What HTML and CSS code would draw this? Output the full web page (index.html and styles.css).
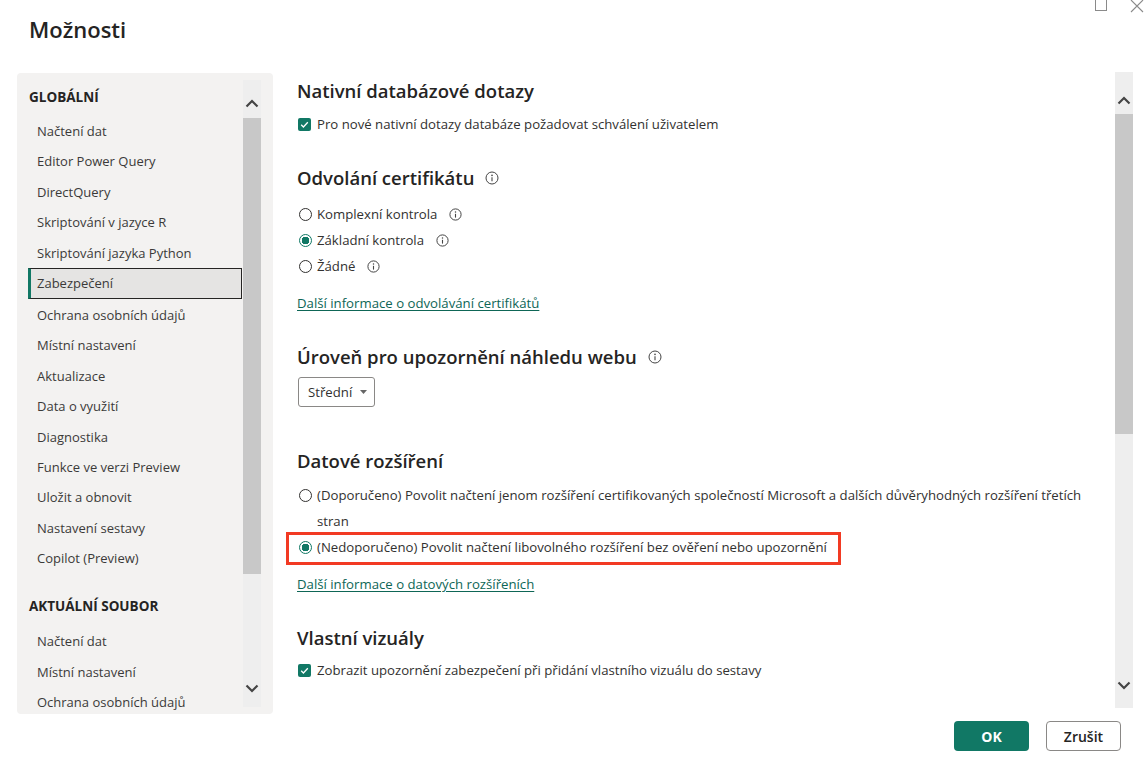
FILE: index.html
```html
<!DOCTYPE html>
<html lang="cs">
<head>
<meta charset="utf-8">
<title>Možnosti</title>
<link rel="stylesheet" href="styles.css">
</head>
<body>
<div class="window-controls">
  <span class="wc-max"></span>
  <svg class="wc-close" width="14" height="13" viewBox="0 0 14 13"><path d="M1 0 L13 12 M13 0 L1 12" stroke="#8a8a8a" stroke-width="1.1" fill="none"/></svg>
</div>
<div class="dialog">
  <h1 class="title">Možnosti</h1>
  <div class="main">
    <nav class="sidebar">
      <div class="nav-list">
        <div class="nav-head">GLOBÁLNÍ</div>
        <div class="nav-item">Načtení dat</div>
        <div class="nav-item">Editor Power Query</div>
        <div class="nav-item">DirectQuery</div>
        <div class="nav-item">Skriptování v jazyce R</div>
        <div class="nav-item">Skriptování jazyka Python</div>
        <div class="nav-item selected">Zabezpečení</div>
        <div class="nav-item">Ochrana osobních údajů</div>
        <div class="nav-item">Místní nastavení</div>
        <div class="nav-item">Aktualizace</div>
        <div class="nav-item">Data o využití</div>
        <div class="nav-item">Diagnostika</div>
        <div class="nav-item">Funkce ve verzi Preview</div>
        <div class="nav-item">Uložit a obnovit</div>
        <div class="nav-item">Nastavení sestavy</div>
        <div class="nav-item">Copilot (Preview)</div>
        <div class="nav-head second">AKTUÁLNÍ SOUBOR</div>
        <div class="nav-item">Načtení dat</div>
        <div class="nav-item">Místní nastavení</div>
        <div class="nav-item">Ochrana osobních údajů</div>
      </div>
      <div class="scrollbar side-scroll">
        <svg class="chev" width="14" height="9" viewBox="0 0 14 9"><path d="M1.5 7.5 L7 2 L12.5 7.5" stroke="#444" stroke-width="2.2" fill="none"/></svg>
        <div class="thumb side-thumb"></div>
        <div class="track-fill"></div>
        <svg class="chev" width="14" height="9" viewBox="0 0 14 9"><path d="M1.5 1.5 L7 7 L12.5 1.5" stroke="#444" stroke-width="2.2" fill="none"/></svg>
      </div>
    </nav>
    <section class="content">
      <div class="content-inner">
        <h2 class="heading h-first">Nativní databázové dotazy</h2>
        <div class="row check-row r-1">
          <span class="checkbox"><svg width="13" height="13" viewBox="0 0 13 13"><path d="M3.2 6.8 L5.4 9 L9.8 4.3" stroke="#fff" stroke-width="1.3" fill="none"/></svg></span>
          <span>Pro nové nativní dotazy databáze požadovat schválení uživatelem</span>
        </div>

        <h2 class="heading h-sec2">Odvolání certifikátu <svg class="info big" width="14" height="14" viewBox="0 0 14 14"><circle cx="7" cy="7" r="6" stroke="#444" stroke-width="1" fill="none"/><circle cx="7" cy="4.4" r="0.8" fill="#444"/><path d="M7 6.2 V10.2" stroke="#444" stroke-width="1.1"/></svg></h2>
        <div class="radio-group rg-1">
          <div class="row"><span class="radio"></span><span>Komplexní kontrola</span><svg class="info" width="13" height="13" viewBox="0 0 13 13"><circle cx="6.5" cy="6.5" r="5.6" stroke="#444" stroke-width="1" fill="none"/><circle cx="6.5" cy="4" r="0.75" fill="#444"/><path d="M6.5 5.8 V9.6" stroke="#444" stroke-width="1.1"/></svg></div>
          <div class="row"><span class="radio on"></span><span>Základní kontrola</span><svg class="info" width="13" height="13" viewBox="0 0 13 13"><circle cx="6.5" cy="6.5" r="5.6" stroke="#444" stroke-width="1" fill="none"/><circle cx="6.5" cy="4" r="0.75" fill="#444"/><path d="M6.5 5.8 V9.6" stroke="#444" stroke-width="1.1"/></svg></div>
          <div class="row"><span class="radio"></span><span>Žádné</span><svg class="info" width="13" height="13" viewBox="0 0 13 13"><circle cx="6.5" cy="6.5" r="5.6" stroke="#444" stroke-width="1" fill="none"/><circle cx="6.5" cy="4" r="0.75" fill="#444"/><path d="M6.5 5.8 V9.6" stroke="#444" stroke-width="1.1"/></svg></div>
        </div>
        <a class="link l-1" href="#">Další informace o odvolávání certifikátů</a>

        <h2 class="heading h-sec3">Úroveň pro upozornění náhledu webu <svg class="info big" width="14" height="14" viewBox="0 0 14 14"><circle cx="7" cy="7" r="6" stroke="#444" stroke-width="1" fill="none"/><circle cx="7" cy="4.4" r="0.8" fill="#444"/><path d="M7 6.2 V10.2" stroke="#444" stroke-width="1.1"/></svg></h2>
        <div class="dropdown">Střední <svg width="7" height="4" viewBox="0 0 7 4"><path d="M0 0 H7 L3.5 4 Z" fill="#666"/></svg></div>

        <h2 class="heading h-sec4">Datové rozšíření</h2>
        <div class="radio-group rg-2">
          <div class="row wrap"><span class="radio"></span><span class="wrap-text">(Doporučeno) Povolit načtení jenom rozšíření certifikovaných společností Microsoft a dalších důvěryhodných rozšíření třetích stran</span></div>
          <div class="row highlighted"><span class="radio on"></span><span>(Nedoporučeno) Povolit načtení libovolného rozšíření bez ověření nebo upozornění</span></div>
        </div>
        <a class="link l-2" href="#">Další informace o datových rozšířeních</a>

        <h2 class="heading h-sec5">Vlastní vizuály</h2>
        <div class="row check-row r-5">
          <span class="checkbox"><svg width="13" height="13" viewBox="0 0 13 13"><path d="M3.2 6.8 L5.4 9 L9.8 4.3" stroke="#fff" stroke-width="1.3" fill="none"/></svg></span>
          <span>Zobrazit upozornění zabezpečení při přidání vlastního vizuálu do sestavy</span>
        </div>
      </div>
      <div class="scrollbar main-scroll">
        <svg class="chev" width="14" height="9" viewBox="0 0 14 9"><path d="M1.5 7.5 L7 2 L12.5 7.5" stroke="#444" stroke-width="2.2" fill="none"/></svg>
        <div class="thumb main-thumb"></div>
        <div class="track-fill"></div>
        <svg class="chev" width="14" height="9" viewBox="0 0 14 9"><path d="M1.5 1.5 L7 7 L12.5 1.5" stroke="#444" stroke-width="2.2" fill="none"/></svg>
      </div>
    </section>
  </div>
  <div class="footer">
    <button class="btn btn-ok">OK</button>
    <button class="btn btn-cancel">Zrušit</button>
  </div>
</div>
</body>
</html>
```

FILE: styles.css
```css
* { box-sizing: border-box; }
html, body { margin: 0; padding: 0; }
body {
  width: 1144px;
  height: 757px;
  overflow: hidden;
  background: #fff;
  font-family: "Open Sans", "Noto Sans", sans-serif;
  font-size: 13.2px;
  color: #323130;
  position: relative;
}
.window-controls {
  position: absolute;
  top: 0;
  right: 0;
  width: 60px;
  height: 14px;
}
.wc-max {
  position: absolute;
  left: 11px;
  top: -2px;
  width: 12px;
  height: 13px;
  border: 1px solid #8a8a8a;
}
.wc-close {
  position: absolute;
  left: 46px;
  top: 0;
}
.dialog {
  display: flex;
  flex-direction: column;
  height: 757px;
}
.title {
  margin: 14px 0 0 29px;
  font-size: 22px;
  font-weight: 600;
  line-height: 30px;
  color: #252423;
}
.main {
  display: flex;
  margin-top: 29px;
  height: 641px;
}
.sidebar {
  flex: none;
  width: 256px;
  margin-left: 17px;
  height: 641px;
  background: #f3f2f1;
  border-radius: 4px;
  display: flex;
  padding: 7px 13px 7px 11px;
  overflow: hidden;
}
.nav-list {
  width: 214px;
  height: 641px;
  margin-top: -7px;
  padding-top: 11px;
  overflow: hidden;
  flex: none;
}
.nav-head {
  height: 26px;
  line-height: 26px;
  font-weight: 700;
  font-size: 13.5px;
  color: #252423;
  padding-left: 1px;
  margin-bottom: 6px;
}
.nav-head.second { margin-top: 20px; margin-bottom: 7px; }
.nav-item {
  height: 30.4px;
  line-height: 30px;
  padding-left: 6px;
  border-left: 3px solid transparent;
  color: #3b3a39;
  white-space: nowrap;
  font-size: 13px;
}
.nav-item.selected {
  background: #e5e4e3;
  border: 1px solid #252423;
  border-left: 3px solid #117865;
  line-height: 28px;
  padding-left: 6px;
  height: 31px;
  margin-bottom: 1px;
}
.scrollbar {
  width: 18px;
  background: #eeeeee;
  display: flex;
  flex-direction: column;
  align-items: center;
  flex: none;
}
.side-scroll { margin-left: 1px; height: 627px; }
.chev { flex: none; }
.scrollbar .chev:first-child { margin-top: 19px; }
.scrollbar .chev:last-child { margin-bottom: 14px; }
.thumb {
  width: 18px;
  background: #c8c8c8;
  flex: none;
}
.side-thumb { margin-top: 10px; height: 456px; }
.main-thumb { margin-top: 9px; height: 320px; }
.track-fill { flex: 1; }
.content {
  flex: 1;
  display: flex;
  height: 636px;
  margin-top: -1px;
}
.content-inner {
  flex: 1;
  padding-left: 24px;
  padding-top: 6px;
  display: flex;
  flex-direction: column;
  align-items: flex-start;
}
.main-scroll { margin-right: 11px; height: 636px; }
.main-scroll .chev:first-child { margin-top: 24px; }
.main-scroll .chev:last-child { margin-bottom: 18px; }
.heading {
  margin: 0;
  font-size: 18.5px;
  font-weight: 600;
  line-height: 26px;
  color: #252423;
  display: flex;
  align-items: center;
  white-space: nowrap;
}
.h-sec2 { margin-top: 28px; }
.h-sec3 { margin-top: 28px; }
.h-sec4 { margin-top: 41px; }
.h-sec5 { margin-top: 28px; }
.row {
  display: flex;
  align-items: center;
  height: 26px;
  line-height: 26px;
  white-space: nowrap;
  color: #323130;
}
.check-row { margin-top: 7px; }
.check-row.r-5 { margin-top: 6px; }
.checkbox {
  width: 13px;
  height: 13px;
  border-radius: 2px;
  background: #117865;
  margin-left: 1px;
  margin-right: 6px;
  display: inline-flex;
  flex: none;
}
.radio {
  width: 13px;
  height: 13px;
  border-radius: 50%;
  border: 1px solid #323130;
  margin-left: 2px;
  margin-right: 5px;
  flex: none;
  background: #fff;
}
.radio.on {
  border-color: #117865;
  background: radial-gradient(circle, #117865 0 3.6px, #fff 4px);
}
.info {
  margin-left: 12px;
  flex: none;
}
.info.big { margin-left: 11px; }
.rg-1 { margin-top: 10px; }
.rg-2 { margin-top: 8px; }
.link {
  color: #0e6656;
  text-decoration: underline;
  text-underline-offset: 2px;
  line-height: 26px;
  height: 26px;
}
.l-1 { margin-top: 11px; }
.l-2 { margin-top: 11px; }
.dropdown {
  margin-top: 7px;
  margin-left: 1px;
  width: 77px;
  height: 30px;
  border: 1px solid #8a8886;
  border-radius: 3px;
  display: flex;
  align-items: center;
  padding-left: 9px;
  gap: 8px;
}
.row.wrap {
  height: 52px;
  align-items: flex-start;
  white-space: normal;
  width: 800px;
}
.row.wrap .radio { margin-top: 6.5px; }
.wrap-text { width: 778px; }
.row.highlighted {
  position: relative;
  width: fit-content;
}
.row.highlighted::after {
  content: "";
  position: absolute;
  left: -11px;
  right: -14px;
  top: -2px;
  bottom: -5px;
  border: 3px solid #f23a23;
}
.footer {
  display: flex;
  justify-content: flex-end;
  gap: 17px;
  padding-right: 23px;
  margin-top: 7px;
}
.btn {
  width: 75px;
  height: 30px;
  border-radius: 4px;
  font-family: "Open Sans", sans-serif;
  font-size: 14px;
  font-weight: 700;
  cursor: pointer;
}
.btn-ok {
  background: #117865;
  color: #fff;
  border: none;
}
.btn-cancel {
  background: #fff;
  color: #252423;
  border: 1px solid #8a8886;
  font-weight: 600;
}
```
